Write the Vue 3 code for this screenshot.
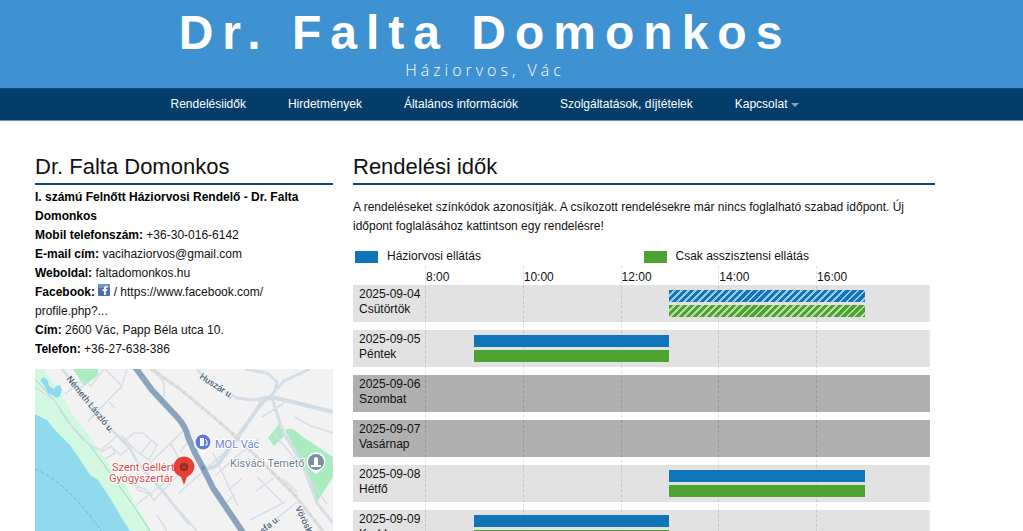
<script setup>
const links = ['Rendelésiidők', 'Hirdetmények', 'Általános információk', 'Szolgáltatások, díjtételek']

const firstHour = 8
const span = 10.33
const hours = [8, 10, 12, 14, 16]

const days = [
  { date: '2025-09-04', name: 'Csütörtök', from: 13, to: 17, full: true },
  { date: '2025-09-05', name: 'Péntek', from: 9, to: 13 },
  { date: '2025-09-06', name: 'Szombat', closed: true },
  { date: '2025-09-07', name: 'Vasárnap', closed: true },
  { date: '2025-09-08', name: 'Hétfő', from: 13, to: 17 },
  { date: '2025-09-09', name: 'Kedd', from: 9, to: 13 }
]

const at = (hour) => `${((hour - firstHour) / span) * 100}%`
const barStyle = (day) => ({
  marginLeft: at(day.from),
  width: `${((day.to - day.from) / span) * 100}%`
})
</script>

<template>
  <div class="page">
    <header class="banner">
      <h1>Dr. Falta Domonkos</h1>
      <p>Háziorvos, Vác</p>
    </header>

    <nav class="menu">
      <a v-for="link in links" :key="link" href="#">{{ link }}</a>
      <a href="#" class="drop">Kapcsolat<span class="caret"></span></a>
    </nav>

    <main class="columns">
      <aside>
        <h2>Dr. Falta Domonkos</h2>
        <div class="contact">
          <p><b>I. számú Felnőtt Háziorvosi Rendelő - Dr. Falta Domonkos</b></p>
          <p><b>Mobil telefonszám:</b> +36-30-016-6142</p>
          <p><b>E-mail cím:</b> <a href="#">vacihaziorvos@gmail.com</a></p>
          <p><b>Weboldal:</b> <a href="#">faltadomonkos.hu</a></p>
          <p>
            <b>Facebook:</b>{{ ' ' }}
            <a href="#">
              <svg class="fb" viewBox="0 0 12 12" aria-hidden="true">
                <rect width="12" height="12" rx="1" fill="#4a72a8" />
                <rect width="12" height="4" rx="1" fill="#7194bf" />
                <path d="M6 11V7H4.500V5.300H6V4.200C6 2.600 6.900 1.900 8.200 1.900H9.500V3.600H8.700C8.100 3.600 7.900 3.900 7.900 4.400V5.300H9.500L9.200 7H7.900V11Z" fill="#fff" />
              </svg>
              / https://www.facebook.com/<br />profile.php?...
            </a>
          </p>
          <p><b>Cím:</b> 2600 Vác, Papp Béla utca 10.</p>
          <p><b>Telefon:</b> +36-27-638-386</p>
        </div>

        <svg class="map" viewBox="0 0 298 180" role="img" aria-label="Térkép">
          <rect width="298" height="180" fill="#f2f2f3" />
          <path d="M0 0H8L27 26L38 46L55 68L72 93L92 119L105 143L117 162L128 180H0Z" fill="#d3f8e2" />
          <path d="M0 45L12 51L20 61L35 76L46 92L55 106L63 111L75 129L85 146L95 162L104 180H0Z" fill="#90daee" />
          <path d="M0 100C25 110 50 138 66 162" fill="none" stroke="#6db9d5" stroke-width="1" stroke-dasharray="4 2" />
          <path d="M5 11L9 8L13 12L14 17L19 20L21 17L25 16L27 21L25 27L21 29L17 26L13 24L9 16Z" fill="#90daee" />
          <path d="M38 0H63V6L49 17Z M233 69L245 54L249 67L239 77Z M250 61Q256 58 261 62L268 68L298 88V108L282 133L272 111L262 84Z" fill="#aaebc2" />
          <path d="M0 10L20 32L35 55L57 79L75 104L98 136L115 162" fill="none" stroke="#9bd9bb" stroke-width="1" />
          <g fill="none" stroke="#d5dde6" stroke-width="1.500">
            <path d="M0 18L20 32L29 48L46 69L58 78L66 81L83 66 M66 83L76 77L80 84L70 90 M75 77L86 86L95 78 M86 66L100 81L114 91L122 76L108 64L99 64L88 73 M106 84L116 72" />
            <path d="M30 25L48 11L56 17L69 0 M53 52L87 17L70 0 M74 33L80 39 M92 0L86 20 M50 14L45 20 M120 0L129 14V28 M112 97L149 61 M135 74L143 87V106L118 132 M144 124L190 83 M88 112L112 121L118 130 M95 105L103 121L118 126 M101 136L133 111 M122 146L132 162 M145 142L162 162" />
            <path d="M145 83L155 70 M180 107L202 87L224 70 M178 84L203 137 M192 133L200 125 M193 122L207 109 M221 122L239 109 M222 108L247 133 M247 109L262 123 M262 133L240 151 M250 133L215 151 M239 65L266 97L292 135 M260 48L276 57L298 64 M227 48L249 34 M223 31L228 36" />
          </g>
          <g fill="none" stroke="#d5dde6" stroke-width="3">
            <path d="M27 0L75 59L95 79L102 93L125 119L155 156" />
            <path d="M237 29L248 63L268 96L282 134L298 154" />
            <path d="M235 28L240 22L242 13L232 4L210 0 M242 20L249 12L275 0" />
            <path d="M162 1L176 14L202 29L218 31L235 28" />
          </g>
          <path d="M168 99Q178 101 184 94L202 69L225 36Q232 27 240 29L262 34L298 43" fill="none" stroke="#d2dce5" stroke-width="4" />
          <path d="M116 0L145 20L188 56L218 84L258 124L288 162L300 177" fill="none" stroke="#dcdcdd" stroke-width="3" />
          <path d="M116 0L145 20L188 56L218 84L258 124L288 162L300 177" fill="none" stroke="#cfcfd1" stroke-width="4" stroke-dasharray="1 7" />
          <path d="M100 -2L117 21L143 49Q151 58 153 68L160 84L168 99L178 119L207 162L219 180" fill="none" stroke="#8aa4c0" stroke-width="6" />
          <circle cx="168" cy="99" r="2" fill="#7087a8" />
          <g class="street">
            <text transform="translate(31 10) rotate(51)">Németh László u.</text>
            <text transform="translate(164 9) rotate(33)">Huszár u.</text>
            <text transform="translate(260 139) rotate(64)">Vöröske</text>
            <text transform="translate(228 165) rotate(-40)">sfa u.</text>
          </g>
          <g class="place">
            <text fill="#dc4c47"><tspan x="77" y="102">Szent Gellért</tspan><tspan x="74" y="113">Gyógyszertár</tspan></text>
            <text x="180" y="79" fill="#6f84d6">MOL Vác</text>
            <text x="195" y="98" fill="#6b7f90">Kisváci Temető</text>
          </g>
          <path d="M149 116L146 108Q138 104 138.500 98A10.500 10.500 0 0 1 159.500 98Q159 104 152 108Z" fill="#e63f34" />
          <circle cx="149" cy="98" r="4" fill="#8e2923" />
          <path d="M147 96L151 100M151 96L147 100" stroke="#c0443b" stroke-width="1" />
          <path d="M168 85L163 81A9 9 0 1 1 173 81Z" fill="#fff" />
          <circle cx="168" cy="73" r="7.500" fill="#6079d2" />
          <path d="M165 69H169V77H165Z" fill="#fff" />
          <path d="M170 70L172 72V76H170" fill="none" stroke="#fff" stroke-width="1" />
          <path d="M281 105L275 100A9.500 9.500 0 1 1 287 100Z" fill="#fff" />
          <circle cx="281" cy="93" r="8" fill="#7b909f" />
          <path d="M279 96V91Q279 88 281 88T283 91V96H286V98H276V96Z" fill="#fff" />
        </svg>
      </aside>

      <section>
        <h2>Rendelési idők</h2>
        <p class="intro">
          A rendeléseket színkódok azonosítják. A csíkozott rendelésekre már nincs foglalható szabad időpont. Új
          időpont foglalásához kattintson egy rendelésre!
        </p>

        <div class="chart">
          <ul class="legend">
            <li><i class="swatch blue"></i>Háziorvosi ellátás</li>
            <li><i class="swatch green"></i>Csak asszisztensi ellátás</li>
          </ul>

          <div class="plot">
            <div class="rows">
              <div v-for="day in days" :key="day.date" class="row" :class="{ closed: day.closed }">
                <div class="day">{{ day.date }}<br />{{ day.name }}</div>
                <div v-if="!day.closed" class="track" :class="{ full: day.full }">
                  <button class="bar blue" :style="barStyle(day)" :aria-label="`Háziorvosi ellátás ${day.date}`"></button>
                  <button class="bar green" :style="barStyle(day)" :aria-label="`Csak asszisztensi ellátás ${day.date}`"></button>
                </div>
              </div>
            </div>
            <div class="scale">
              <span v-for="hour in hours" :key="hour" class="tick" :style="{ left: at(hour) }">{{ hour }}:00</span>
            </div>
          </div>
        </div>
      </section>
    </main>
  </div>
</template>

<style>
html {
  scrollbar-width: none;
}
</style>

<style scoped>
.page {
  font: 12px/19px "Liberation Sans", Arial, sans-serif;
  color: #111;
  background: #fff;
}
h1, h2, p, ul {
  margin: 0;
  padding: 0;
}
a {
  color: inherit;
  text-decoration: none;
}
.banner {
  box-sizing: border-box;
  height: 88px;
  padding: 5px 88px 0 35px;
  text-align: center;
  color: #fff;
  background: #3e92d2;
}
h1 {
  font-size: 48px;
  line-height: 55px;
  letter-spacing: 9px;
}
.banner p {
  font: 300 16px/20px "Open Sans", sans-serif;
  letter-spacing: 4px;
}
.menu {
  display: flex;
  justify-content: center;
  gap: 42px;
  padding: 0 88px 0 35px;
  line-height: 31px;
  color: #fff;
  background: #033e6b;
  border-top: 1px solid #0b4c7e;
  border-bottom: 1px solid #6f93ae;
}
.drop {
  display: flex;
  align-items: center;
  gap: 4px;
}
.caret {
  border: 4px solid transparent;
  border-top-color: #8ba6bb;
  border-bottom: 0;
}
.columns {
  display: grid;
  grid-template-columns: 298fr 582fr;
  gap: 20px;
  padding: 33px 88px 0 35px;
}
h2 {
  padding-bottom: 3px;
  font-size: 22px;
  font-weight: 400;
  line-height: 26px;
  border-bottom: 2px solid #0b4876;
}
.contact {
  padding: 3px 0 10px;
}
.contact b {
  color: #000;
}
.fb {
  width: 12px;
  height: 12px;
}
.map {
  display: block;
  width: 100%;
}
.street {
  font: 500 9px Roboto, sans-serif;
  fill: #50657a;
  stroke: #f4f5f6;
  stroke-width: 2px;
  paint-order: stroke;
}
.place {
  font: 400 11px Roboto, sans-serif;
  stroke: #fff;
  stroke-width: 2px;
  paint-order: stroke;
}
.intro {
  padding: 13px 0 11px;
}
.chart {
  padding-right: 5px;
}
.legend {
  display: grid;
  grid-template-columns: 1fr 1fr;
  list-style: none;
}
.legend li {
  display: flex;
  align-items: center;
  gap: 9px;
  padding-left: 2px;
}
.swatch {
  width: 23px;
  height: 12px;
}
.blue {
  background-color: #0f75b8;
}
.green {
  background-color: #4da32f;
}
.plot {
  position: relative;
  padding-top: 19px;
}
.rows {
  display: grid;
  gap: 8px;
}
.row {
  display: flex;
  height: 37px;
  background: #e2e2e2;
}
.closed {
  background: #b0b0b0;
}
.day {
  width: 66px;
  padding: 2px 0 0 6px;
  line-height: 15px;
}
.track {
  flex: 1;
  display: flex;
  flex-direction: column;
  gap: 3px;
  padding-top: 5px;
}
.bar {
  position: relative;
  z-index: 1;
  height: 12px;
  padding: 0;
  border: 0;
  cursor: pointer;
}
.full .bar {
  background-image: repeating-linear-gradient(135deg, transparent 0 3px, rgba(255, 255, 255, 0.6) 3px 5px);
}
.scale {
  position: absolute;
  inset: 0 0 0 72px;
}
.tick {
  position: absolute;
  top: 0;
  bottom: 0;
  padding-top: 2px;
  border-left: 1px dashed rgba(0, 0, 0, 0.12);
}
</style>
